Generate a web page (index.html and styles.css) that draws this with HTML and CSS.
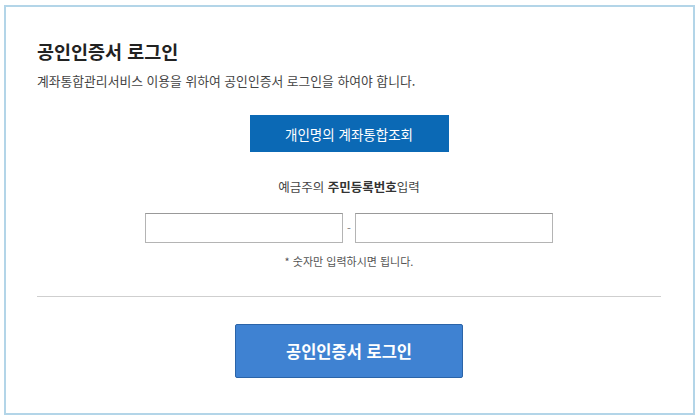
FILE: index.html
```html
<!DOCTYPE html>
<html lang="ko">
<head>
    <meta charset="UTF-8">
    <meta name="viewport" content="width=device-width, initial-scale=1.0">
    <title>공인인증서 로그인</title>
    <link rel="stylesheet" href="styles.css">
</head>
<body>

    <div class="login-box">
        <h1 class="login-title">공인인증서 로그인</h1>
        <p class="login-desc">계좌통합관리서비스 이용을 위하여 공인인증서 로그인을 하여야 합니다.</p>

        <!-- 조회 방식 -->
        <div class="tab-row">
            <button class="tab-btn">개인명의 계좌통합조회</button>
        </div>

        <!-- 주민등록번호 입력 -->
        <p class="id-label">예금주의 <strong>주민등록번호</strong>입력</p>
        <div class="id-inputs">
            <input type="text" class="id-input" maxlength="6">
            <span class="id-dash">-</span>
            <input type="password" class="id-input" maxlength="7">
        </div>
        <p class="id-note">* 숫자만 입력하시면 됩니다.</p>

        <hr class="divider">

        <div class="submit-row">
            <button class="submit-btn">공인인증서 로그인</button>
        </div>
    </div>

</body>
</html>
```

FILE: styles.css
```css
body {
    margin: 0;
    background-color: #fff;
    font-family: "Noto Sans CJK KR", "Noto Sans", sans-serif;
    color: #333;
}

.login-box {
    box-sizing: border-box;
    margin: 5px 5px 0 4px;
    height: 410px;
    border: 2px solid #b3d5e8;
    padding: 34px 32px 0 31px;
}

.login-title {
    margin: 0;
    font-size: 18.5px;
    line-height: 20px;
    font-weight: bold;
    color: #222;
}

.login-desc {
    margin: 12px 0 0 0;
    font-size: 12.8px;
    line-height: 16px;
    color: #444;
}

.tab-row {
    margin-top: 26px;
    display: flex;
    justify-content: center;
}

.tab-btn {
    width: 199px;
    height: 37px;
    border: none;
    background-color: #0b69b5;
    color: #fff;
    font-family: inherit;
    font-size: 13.5px;
    cursor: pointer;
}

.id-label {
    margin: 27px 0 0 0;
    text-align: center;
    font-size: 12.5px;
    line-height: 16px;
    color: #444;
}

.id-label strong {
    font-weight: bold;
    color: #333;
}

.id-inputs {
    margin-top: 18px;
    display: flex;
    justify-content: center;
    align-items: center;
}

.id-input {
    box-sizing: border-box;
    width: 198px;
    height: 30px;
    margin: 0;
    border: 1px solid #b4b4b4;
    border-top-color: #999;
    padding: 0 6px;
    font-size: 13px;
}

.id-dash {
    width: 12px;
    text-align: center;
    font-size: 11px;
    color: #777;
}

.id-note {
    margin: 11px 0 0 0;
    text-align: center;
    font-size: 11px;
    line-height: 14px;
    color: #555;
}

.divider {
    margin: 28px 0 0 0;
    border: none;
    border-top: 1px solid #cfcfcf;
}

.submit-row {
    margin-top: 27px;
    display: flex;
    justify-content: center;
}

.submit-btn {
    width: 228px;
    height: 54px;
    border: 1px solid #2b64a8;
    border-radius: 2px;
    background-color: #3f82d2;
    color: #fff;
    font-family: inherit;
    font-size: 16.5px;
    font-weight: bold;
    cursor: pointer;
}
```
